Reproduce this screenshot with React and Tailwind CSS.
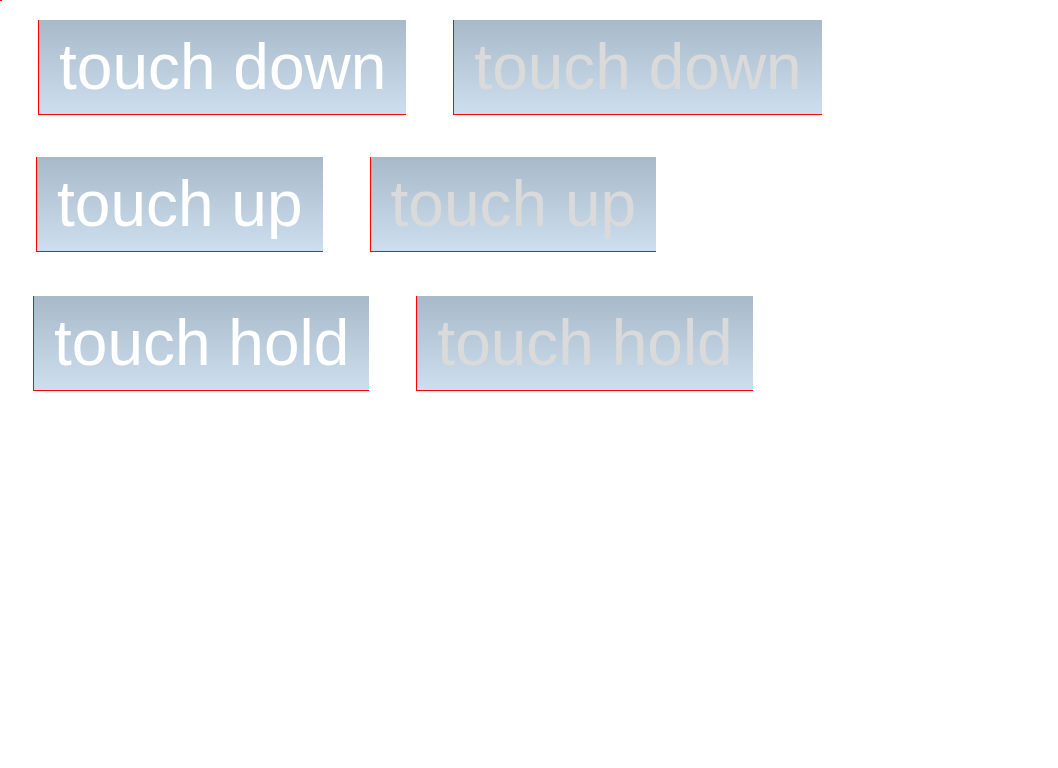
const rows = [
  { label: 'touch down', ml: 'ml-[38px]', mt: 'mt-[19px]' },
  { label: 'touch up', ml: 'ml-[36px]', mt: 'mt-[42px]' },
  { label: 'touch hold', ml: 'ml-[33px]', mt: 'mt-[44px]' },
]

function TouchButton({ label, disabled }) {
  return (
    <div
      className={
        'border-l border-b border-[#ff0000] bg-gradient-to-b from-[#a8b9ca] to-[#cddeee] px-[20px] py-[10px] text-[64px] leading-[normal] whitespace-nowrap ' +
        (disabled ? 'text-[#dadada]' : 'text-white')
      }
    >
      {label}
    </div>
  )
}

export default function App() {
  return (
    <div className="min-h-[768px] bg-white" style={{ fontFamily: '"Liberation Sans", Arial, sans-serif' }}>
      <div className="h-px w-[2px] bg-[#ff0000]" />
      {rows.map((r) => (
        <div key={r.label} className={'flex gap-[47px] ' + r.ml + ' ' + r.mt}>
          <TouchButton label={r.label} />
          <TouchButton label={r.label} disabled />
        </div>
      ))}
    </div>
  )
}
